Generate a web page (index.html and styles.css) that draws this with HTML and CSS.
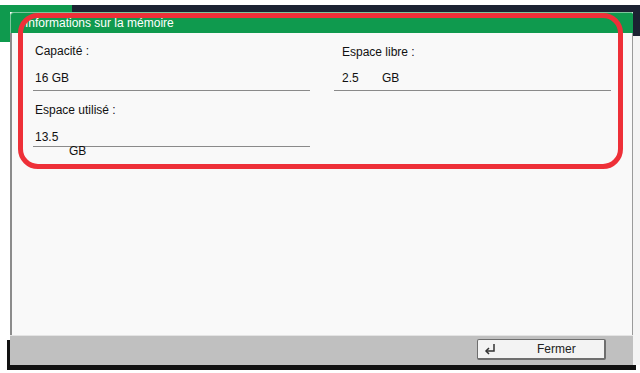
FILE: index.html
```html
<!DOCTYPE html>
<html lang="fr">

<head>
    <meta charset="UTF-8">
    <meta name="viewport" content="width=device-width, initial-scale=1.0">
    <title>Informations sur la mémoire</title>
    <link rel="stylesheet" href="styles.css">
</head>

<body>
    <div class="screen">
        <div class="topbar">
            <div class="tab"></div>
            <div class="rest"></div>
        </div>
        <div class="main">
            <div class="side side-left"></div>
            <section class="panel">
                <header class="panel-header">Informations sur la mémoire</header>
                <div class="panel-body">
                    <div class="fields">
                        <div class="field">
                            <div class="label">Capacité :</div>
                            <div class="value">16 GB</div>
                        </div>
                        <div class="field field-right">
                            <div class="label">Espace libre :</div>
                            <div class="value"><span class="num">2.5</span>GB</div>
                        </div>
                        <div class="field field-second">
                            <div class="label">Espace utilisé :</div>
                            <div class="value value-wrap">13.5<span class="unit">GB</span></div>
                        </div>
                    </div>
                </div>
                <footer class="panel-footer">
                    <button class="close-btn">
                        <svg width="14" height="12" viewBox="0 0 14 12">
                            <path d="M11 1 V8 H3" fill="none" stroke="#333" stroke-width="1.5" />
                            <path d="M6 5 L3 8 L6 11" fill="none" stroke="#333" stroke-width="1.5" />
                        </svg>
                        <span>Fermer</span>
                    </button>
                </footer>
            </section>
            <div class="side side-right"></div>
        </div>
        <!-- highlight drawn over the dialog -->
        <div class="highlight"></div>
    </div>
</body>

</html>
```

FILE: styles.css
```css
:root {
    --green: #0f9a4e;
    --navy: #1c2232;
    --panel: #f9f9f9;
    --footer: #c0c0c0;
    --line: #8a8a8a;
    --red: #ee3038;
}

* {
    box-sizing: border-box;
    margin: 0;
    padding: 0;
    font-family: 'Liberation Sans', Arial, sans-serif;
}

body {
    width: 640px;
    height: 373px;
    overflow: hidden;
    background-color: #fff;
}

.screen {
    position: relative;
    height: 100%;
    padding-top: 5px;
}

.topbar {
    display: flex;
    height: 7px;
}

.topbar .tab {
    width: 72px;
    background-color: var(--green);
}

.topbar .rest {
    flex: 1 1 0%;
    background-color: var(--navy);
}

.main {
    display: flex;
}

.side-left {
    width: 10px;
    background: linear-gradient(var(--green) 0 30px, #fff 30px);
}

.side-right {
    flex: 1 1 0%;
    background: linear-gradient(var(--navy) 0 24px, #f4f4f4 24px);
}

.panel {
    width: 623px;
    display: flex;
    flex-direction: column;
}

.panel-header {
    height: 21px;
    line-height: 21px;
    padding-left: 14px;
    background-color: var(--green);
    color: #fff;
    font-size: 12px;
    border-top-left-radius: 4px;
    border-top-right-radius: 2px;
    border-top: 1px solid #7cc79c;
    border-left: 1px solid #7cc79c;
}

.panel-body {
    height: 302px;
    background-color: var(--panel);
    border-left: 2px solid #8c8c8c;
    border-right: 1px solid #9a9a9a;
    padding: 10px 0 0 21px;
}

.fields {
    display: grid;
    grid-template-columns: 277px 277px;
    column-gap: 24px;
}

.field {
    font-size: 12px;
    color: #111;
}

.field .label {
    line-height: 16px;
    padding-left: 2px;
}

.field .value {
    line-height: 16px;
    padding: 11px 0 4px 2px;
    border-bottom: 1px solid var(--line);
}

.field-right .label,
.field-right .value {
    padding-left: 8px;
}

.field-right .label {
    margin-top: 1px;
}

.field-right .value {
    padding-top: 10px;
}

.num {
    display: inline-block;
    width: 40px;
}

.field-second .label {
    margin-top: 11px;
}

.field .value-wrap {
    line-height: 14px;
    padding-top: 12px;
    padding-bottom: 0;
    height: 29px;
}

.unit {
    display: block;
    margin-left: 34px;
}

.panel-footer {
    height: 30px;
    background-color: var(--footer);
    border-top: 1px solid #e4e4e4;
    display: flex;
    justify-content: flex-end;
    align-items: flex-start;
    padding: 3px 27px 0 0;
    box-shadow: -3px 5px 0 #111, 3px 5px 0 #111;
}

.close-btn {
    width: 129px;
    height: 21px;
    display: flex;
    align-items: center;
    background-color: #f3f3f3;
    border: 1px solid #6e6e6e;
    border-right-width: 2px;
    border-bottom-width: 2px;
    border-radius: 2px;
    font-size: 12px;
    color: #222;
    padding-left: 5px;
}

.close-btn span {
    margin-left: 40px;
}

.highlight {
    position: absolute;
    left: 18px;
    top: 13px;
    width: 605px;
    height: 156px;
    border: 5px solid var(--red);
    border-radius: 20px;
}
```
